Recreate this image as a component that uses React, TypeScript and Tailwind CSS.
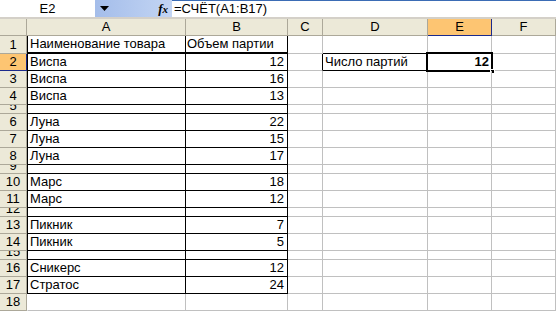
import React from "react";

type Row = { n: number; h: "n" | "t" | "f"; a?: string; b?: string };

const rows: Row[] = [
  { n: 1, h: "f", a: "Наименование товара", b: "Объем партии" },
  { n: 2, h: "n", a: "Виспа", b: "12" },
  { n: 3, h: "n", a: "Виспа", b: "16" },
  { n: 4, h: "n", a: "Виспа", b: "13" },
  { n: 5, h: "t" },
  { n: 6, h: "n", a: "Луна", b: "22" },
  { n: 7, h: "n", a: "Луна", b: "15" },
  { n: 8, h: "n", a: "Луна", b: "17" },
  { n: 9, h: "t" },
  { n: 10, h: "n", a: "Марс", b: "18" },
  { n: 11, h: "n", a: "Марс", b: "12" },
  { n: 12, h: "t" },
  { n: 13, h: "n", a: "Пикник", b: "7" },
  { n: 14, h: "n", a: "Пикник", b: "5" },
  { n: 15, h: "t" },
  { n: 16, h: "n", a: "Сникерс", b: "12" },
  { n: 17, h: "n", a: "Стратос", b: "24" },
  { n: 18, h: "n" },
];

const hCls = (h: Row["h"]) =>
  h === "f" ? "h-[18px]" : h === "t" ? "h-[9px]" : "h-[17px]";

function SheetRow({ r }: { r: Row }) {
  const hc = hCls(r.h);
  const inTable = r.n <= 17;
  const first = r.n === 1;
  const sel = r.n === 2;
  return (
    <div className={`flex ${hc}`}>
      <div
        className={`w-[27px] shrink-0 flex flex-col justify-end items-center overflow-hidden border-r border-b ${
          sel ? "bg-[#fdc572] border-r-[#1b2a8c] border-b-[#1b2a8c]" : "bg-[#ece9d8] border-[#aca899]"
        }`}
      >
        <span className={r.h === "t" ? "leading-[16px] -mb-[1px]" : "leading-[16px]"}>{r.n}</span>
      </div>
      <div
        className={`w-[159px] shrink-0 flex items-center pl-[2px] overflow-hidden ${
          inTable
            ? `border-l border-r border-black ${first ? "border-b-2" : "border-b"} border-b-black`
            : "border-r border-b border-[#c0c0c0] border-l border-l-white"
        }`}
      >
        <span className="leading-[16px] whitespace-nowrap">{r.h !== "t" ? r.a : ""}</span>
      </div>
      <div
        className={`w-[102px] shrink-0 flex items-center justify-end pr-[3px] overflow-hidden ${
          inTable
            ? `border-r border-black ${first ? "border-b-2" : "border-b"} border-b-black`
            : "border-r border-b border-[#c0c0c0]"
        }`}
      >
        <span className={`leading-[16px] whitespace-nowrap ${first ? "w-full text-left pl-[1px]" : ""}`}>
          {r.h !== "t" ? r.b : ""}
        </span>
      </div>
      <div
        className={`w-[35px] shrink-0 border-b border-[#c0c0c0] border-r ${
          sel ? "border-r-black" : ""
        }`}
      />
      <div
        className={`w-[105px] shrink-0 flex items-center pl-[2px] border-r border-b ${
          sel ? "border-black" : r.n === 1 ? "border-r-[#c0c0c0] border-b-black" : "border-[#c0c0c0]"
        }`}
      >
        {sel && <span className="leading-[16px] whitespace-nowrap">Число партий</span>}
      </div>
      <div
        className={`relative w-[64px] shrink-0 flex items-center justify-end pr-[2px] border-r border-b ${
          sel ? "border-black" : r.n === 1 ? "border-r-[#c0c0c0] border-b-black" : "border-[#c0c0c0]"
        }`}
      >
        {sel && (
          <>
            <span className="leading-[16px] font-bold">12</span>
            <div className="absolute left-[-2px] top-[-2px] right-[-2px] bottom-[-2px] border-2 border-black pointer-events-none" />
            <div className="absolute right-[-4px] bottom-[-4px] w-[5px] h-[5px] bg-black border border-white" />
          </>
        )}
      </div>
      <div className="w-[64px] shrink-0 border-r border-b border-[#c0c0c0]" />
    </div>
  );
}

export default function App() {
  return (
    <div className="w-[556px] h-[312px] overflow-hidden bg-white text-[13px] text-black font-['Liberation_Sans',Arial,sans-serif]">
      {/* formula bar */}
      <div className="flex h-[17px]">
        <div className="w-[95px] shrink-0 bg-white flex items-center justify-center">
          <span className="leading-[16px]">E2</span>
        </div>
        <div className="w-[77px] shrink-0 flex items-center bg-gradient-to-r from-[#a4bdea] to-[#c3d5f3]">
          <svg width="9" height="5" viewBox="0 0 9 5" className="ml-[5px]">
            <polygon points="0,0 9,0 4.5,5" fill="#000" />
          </svg>
          <span className="ml-auto mr-[4px] italic font-bold font-['Liberation_Serif',serif] text-[13px] leading-[16px]">
            f<span className="text-[11px]">x</span>
          </span>
        </div>
        <div className="flex-1 bg-white border-t border-[#3b6cb5] flex items-center pl-[2px]">
          <span className="leading-[16px]">=СЧЁТ(А1:В17)</span>
        </div>
      </div>
      <div className="h-[2px] bg-[#d4d0c8]" />
      {/* column headers */}
      <div className="flex h-[17px] bg-[#ece9d8]">
        <div className="w-[27px] shrink-0 border-r border-b border-[#aca899]" />
        {[
          ["A", "w-[159px]"],
          ["B", "w-[102px]"],
          ["C", "w-[35px]"],
          ["D", "w-[105px]"],
          ["E", "w-[64px]"],
          ["F", "w-[64px]"],
        ].map(([l, w]) => (
          <div
            key={l}
            className={`${w} shrink-0 flex items-center justify-center border-r border-b ${
              l === "E" ? "bg-[#fdc572] border-[#1b2a8c]" : "border-[#aca899]"
            }`}
          >
            <span className="leading-[16px]">{l}</span>
          </div>
        ))}
      </div>
      {rows.map((r) => (
        <SheetRow key={r.n} r={r} />
      ))}
    </div>
  );
}
